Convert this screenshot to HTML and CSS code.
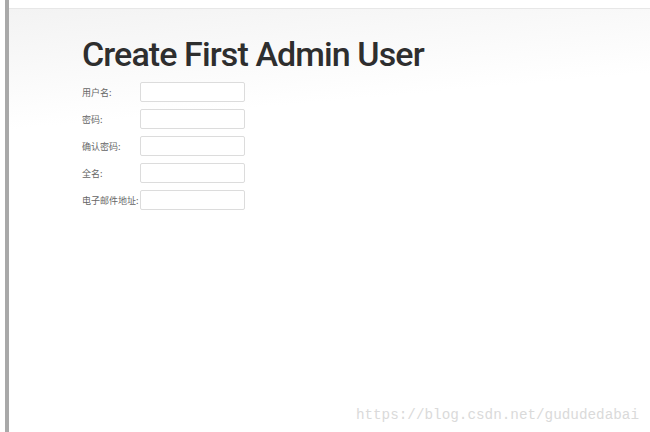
FILE: index.html
```html
<!DOCTYPE html>
<html lang="zh-CN">
<head>
    <meta charset="UTF-8">
    <title>Create First Admin User</title>
    <link rel="stylesheet" href="styles.css">
</head>
<body>
    <div class="page">
        <div class="topbar"></div>
        <div class="content">
            <h1>Create First Admin User</h1>
            <div class="form">
                <div class="row">
                    <label>用户名:</label>
                    <input type="text">
                </div>
                <div class="row">
                    <label>密码:</label>
                    <input type="password">
                </div>
                <div class="row">
                    <label>确认密码:</label>
                    <input type="password">
                </div>
                <div class="row">
                    <label>全名:</label>
                    <input type="text">
                </div>
                <div class="row">
                    <label>电子邮件地址:</label>
                    <input type="text">
                </div>
            </div>
            <div class="watermark">https://blog.csdn.net/gududedabai</div>
        </div>
    </div>
</body>
</html>
```

FILE: styles.css
```css
html, body {
    margin: 0;
    height: 100%;
    background-color: white;
}
.page {
    margin-left: 5px;
    height: 100%;
    border-left: 4px solid #a9a9a9;
    display: flex;
    flex-direction: column;
}
.topbar {
    height: 8px;
    background-color: white;
    border-bottom: 1px solid #e7e7e7;
}
.content {
    flex: 1;
    position: relative;
    padding-left: 73px;
    background: linear-gradient(175deg, #f3f3f3, #ffffff 120px);
}
h1 {
    margin: 0;
    padding-top: 25px;
    font-family: Roboto, sans-serif;
    font-weight: 500;
    font-size: 34px;
    letter-spacing: -0.9px;
    line-height: 40px;
    color: #2e2e2e;
}
.form {
    margin-top: 8px;
    display: flex;
    flex-direction: column;
    gap: 7px;
}
.row {
    display: flex;
    align-items: center;
}
.row label {
    width: 58px;
    font-family: "Noto Sans CJK SC", sans-serif;
    font-size: 9px;
    color: #666;
}
.row input {
    box-sizing: border-box;
    width: 105px;
    height: 20px;
    margin: 0;
    border: 1px solid #dcdcdc;
    border-radius: 2px;
    background-color: white;
}
.watermark {
    position: absolute;
    right: 11px;
    bottom: 9px;
    font-family: "Liberation Mono", monospace;
    font-size: 14.3px;
    color: #dadada;
}
```
